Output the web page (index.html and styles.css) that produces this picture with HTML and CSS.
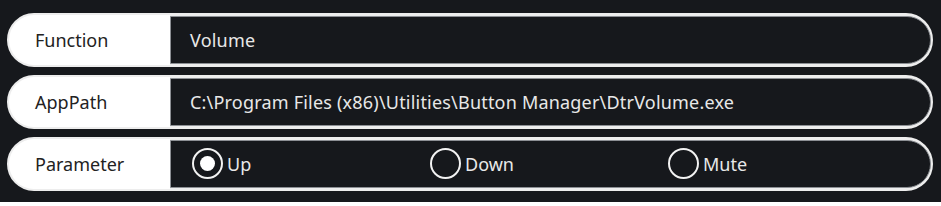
FILE: index.html
```html
<!doctype html>
<html lang="en">
<head>
    <meta charset="UTF-8">
    <title>Button Manager</title>
    <link rel="stylesheet" href="styles.css">
</head>
<body>
<div class="panel">
    <div class="row">
        <div class="label">Function</div>
        <div class="value">Volume</div>
    </div>
    <div class="row">
        <div class="label">AppPath</div>
        <div class="value">C:\Program Files (x86)\Utilities\Button Manager\DtrVolume.exe</div>
    </div>
    <div class="row">
        <div class="label">Parameter</div>
        <div class="value options">
            <label class="radio checked"><span class="dot"></span>Up</label>
            <label class="radio"><span class="dot"></span>Down</label>
            <label class="radio"><span class="dot"></span>Mute</label>
        </div>
    </div>
</div>
</body>
</html>
```

FILE: styles.css
```css
html, body {
    margin: 0;
    padding: 0;
    background: #fff;
}

.panel {
    height: 202px;
    box-sizing: border-box;
    background: #16181c;
    padding: 12.5px 8px 0 7px;
    display: flex;
    flex-direction: column;
    gap: 8px;
    font-family: "Noto Sans", "Open Sans", sans-serif;
    font-size: 18px;
}

.row {
    height: 54px;
    box-sizing: border-box;
    display: flex;
    border: 2px solid #ededed;
    border-radius: 27px;
    background: #ededed;
}

.label {
    width: 161px;
    flex: none;
    display: flex;
    align-items: center;
    padding-left: 26px;
    box-sizing: border-box;
    color: #222;
    background: #fff;
    border-radius: 25px 0 0 25px;
}

.value {
    flex: 1;
    display: flex;
    align-items: center;
    margin: 1px 0 1px 0;
    padding-left: 19px;
    color: #e8e8e8;
    background: #16181c;
    border: 1px solid #8c8f94;
    border-radius: 0 24px 24px 0;
    letter-spacing: 0.2px;
}

.options {
    padding-left: 21px;
    letter-spacing: 0;
}

.radio {
    width: 238px;
    display: flex;
    align-items: center;
}

.dot {
    width: 31px;
    height: 31px;
    box-sizing: border-box;
    border: 2.5px solid #f2f2f2;
    border-radius: 50%;
    margin-right: 4px;
    display: flex;
    align-items: center;
    justify-content: center;
}

.radio.checked .dot::after {
    content: "";
    width: 15px;
    height: 15px;
    border-radius: 50%;
    background: #fff;
}
```
